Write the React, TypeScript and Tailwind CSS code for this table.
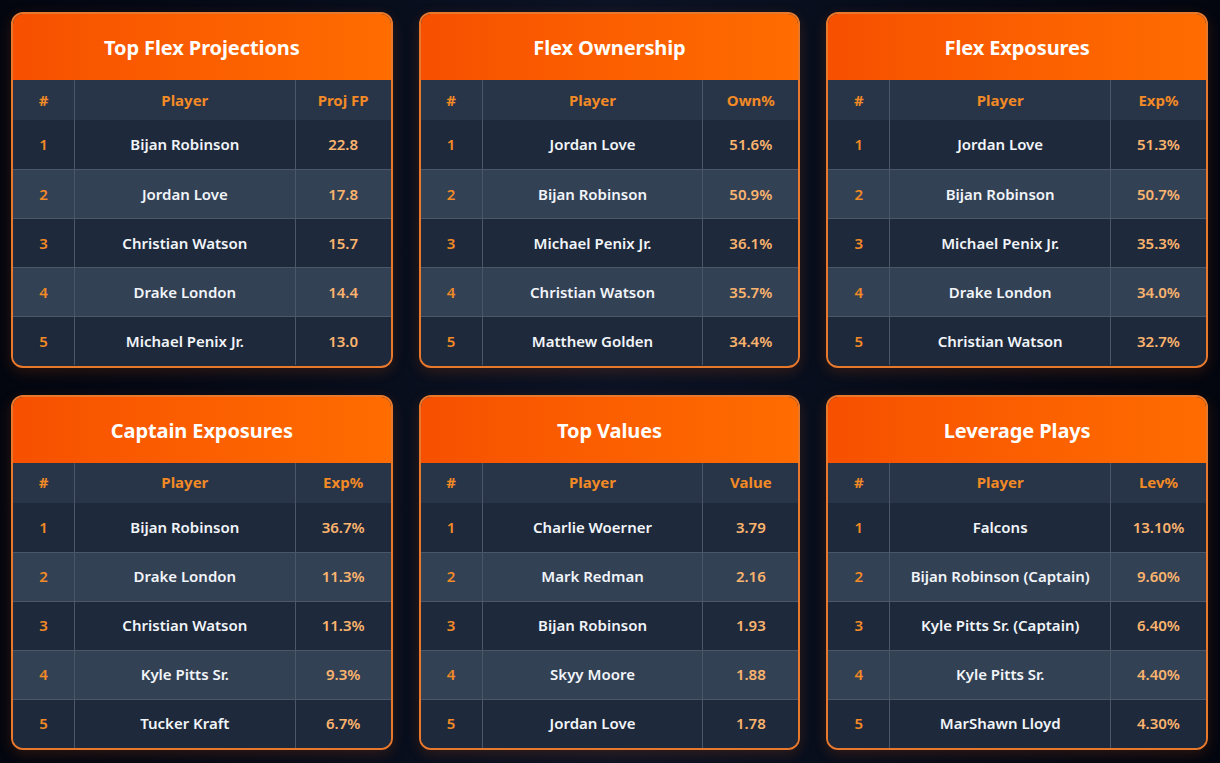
import React from "react";

type Card = { title: string; col: string; rows: [string, string][] };

const cards: Card[] = [
  { title: "Top Flex Projections", col: "Proj FP", rows: [["Bijan Robinson", "22.8"], ["Jordan Love", "17.8"], ["Christian Watson", "15.7"], ["Drake London", "14.4"], ["Michael Penix Jr.", "13.0"]] },
  { title: "Flex Ownership", col: "Own%", rows: [["Jordan Love", "51.6%"], ["Bijan Robinson", "50.9%"], ["Michael Penix Jr.", "36.1%"], ["Christian Watson", "35.7%"], ["Matthew Golden", "34.4%"]] },
  { title: "Flex Exposures", col: "Exp%", rows: [["Jordan Love", "51.3%"], ["Bijan Robinson", "50.7%"], ["Michael Penix Jr.", "35.3%"], ["Drake London", "34.0%"], ["Christian Watson", "32.7%"]] },
  { title: "Captain Exposures", col: "Exp%", rows: [["Bijan Robinson", "36.7%"], ["Drake London", "11.3%"], ["Christian Watson", "11.3%"], ["Kyle Pitts Sr.", "9.3%"], ["Tucker Kraft", "6.7%"]] },
  { title: "Top Values", col: "Value", rows: [["Charlie Woerner", "3.79"], ["Mark Redman", "2.16"], ["Bijan Robinson", "1.93"], ["Skyy Moore", "1.88"], ["Jordan Love", "1.78"]] },
  { title: "Leverage Plays", col: "Lev%", rows: [["Falcons", "13.10%"], ["Bijan Robinson (Captain)", "9.60%"], ["Kyle Pitts Sr. (Captain)", "6.40%"], ["Kyle Pitts Sr.", "4.40%"], ["MarShawn Lloyd", "4.30%"]] },
];

function CardView({ c }: { c: Card }) {
  return (
    <div className="rounded-[12px] border-2 border-[#e8782c] overflow-hidden bg-[#1e293b] shadow-[0_4px_14px_rgba(234,88,12,0.18)] flex flex-col">
      <div className="h-[66px] pt-[2px] flex items-center justify-center bg-gradient-to-r from-[#f75000] to-[#ff6c00]">
        <span className="text-white text-[20px] font-bold tracking-[-0.1px]">{c.title}</span>
      </div>
      <div className="grid grid-cols-[62px_1fr_95px] h-[40px] bg-[#283447] text-[#f28a26] text-[15px] font-bold">
        <div className="flex items-center justify-center border-r border-[#4b5668]">#</div>
        <div className="flex items-center justify-center border-r border-[#4b5668]">Player</div>
        <div className="flex items-center justify-center">{c.col}</div>
      </div>
      {c.rows.map((r, i) => (
        <div
          key={i}
          className={`grid grid-cols-[62px_1fr_95px] h-[49px] text-[15px] font-semibold ${i % 2 === 0 ? "bg-[#1e293b]" : "bg-[#334155]"} ${i > 0 ? "border-t border-[#4b5668]" : ""}`}
        >
          <div className="flex items-center justify-center border-r border-[#4b5668] text-[#f28a26]">{i + 1}</div>
          <div className="flex items-center justify-center border-r border-[#4b5668] text-[#f1f5f9]">{r[0]}</div>
          <div className="flex items-center justify-center text-[#fbb46e]">{r[1]}</div>
        </div>
      ))}
    </div>
  );
}

export default function App() {
  return (
    <div
      className="w-[1220px] h-[763px] overflow-hidden bg-gradient-to-r from-[#03060f] via-[#0c1324] to-[#03060f] pl-[11px] pr-[12px] pt-[12px] pb-[13px] grid grid-cols-3 gap-x-[26px] gap-y-[27px]"
      style={{ fontFamily: '"Noto Sans", "Open Sans", sans-serif' }}
    >
      {cards.map((c, i) => (
        <CardView key={i} c={c} />
      ))}
    </div>
  );
}
